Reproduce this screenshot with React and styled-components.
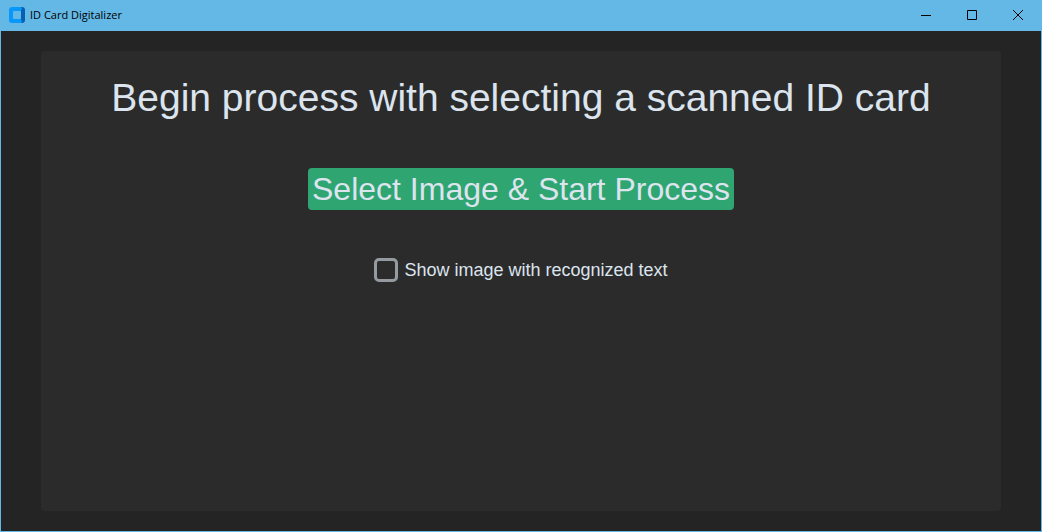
import React from "react";
import styled, { createGlobalStyle } from "styled-components";

const GlobalStyle = createGlobalStyle`
  *, *::before, *::after { box-sizing: border-box; }
  body { margin: 0; background: #242424; }
`;

const Window = styled.div`
  min-height: 100vh;
  display: flex;
  flex-direction: column;
  border: 1px solid #64b8e6;
  background: #242424;
  color: #dce4ee;
  font-family: "Liberation Sans", Arial, sans-serif;
`;

const TitleBar = styled.header`
  display: flex;
  align-items: center;
  height: 30px;
  padding: 0 0 2px 8px;
  background: #64b8e6;
  color: #000;
`;

const AppIcon = styled.svg`
  width: 16px;
  height: 16px;
  margin-right: 5px;
`;

const WindowTitle = styled.span`
  flex: 1;
  font-family: "Open Sans", "Noto Sans", sans-serif;
  font-size: 11px;
  line-height: 16px;
`;

const WindowButton = styled.button`
  display: flex;
  align-items: center;
  justify-content: center;
  width: 46px;
  height: 28px;
  padding: 0;
  border: 0;
  background: transparent;
`;

const Glyph = styled.svg`
  width: 10px;
  height: 10px;
  overflow: visible;
  fill: none;
  stroke: #000;
  stroke-width: 1;
`;

const Panel = styled.main`
  flex: 1;
  display: flex;
  flex-direction: column;
  align-items: center;
  margin: 20px 40px;
  padding: 20px;
  border-radius: 4px;
  background: #2b2b2b;
`;

const Heading = styled.h1`
  margin: 0;
  font-size: 39px;
  font-weight: 400;
  line-height: 54px;
  text-align: center;
`;

const PrimaryButton = styled.button`
  min-height: 42px;
  margin: 43px 0 48px;
  padding: 0 4px;
  border: 0;
  border-radius: 4px;
  background: #2fa572;
  color: #dce4ee;
  font-family: inherit;
  font-size: 32px;
  line-height: 42px;
`;

const CheckLabel = styled.label`
  display: flex;
  align-items: center;
  gap: 6px;
  font-size: 18px;
  line-height: 24px;
`;

const CheckBox = styled.input`
  appearance: none;
  width: 24px;
  height: 24px;
  margin: 0;
  border: 3px solid #949a9f;
  border-radius: 5px;
  background: transparent;
  &:checked { background: #2fa572; }
`;

export default function App() {
  return (
    <Window>
      <GlobalStyle />
      <TitleBar>
        <AppIcon viewBox="0 0 16 16" aria-hidden="true">
          <path d="M10 0H13Q16 0 16 3V13Q16 16 13 16H10Z" fill="#0560b4" />
          <path d="M3 0H12L13 2L12 4V12L13 14L12 16H3Q0 16 0 13V3Q0 0 3 0Z" fill="#0898fa" />
          <path d="M12 4L13 2V14L12 12Z" fill="#0560b4" />
          <rect x="4" y="4" width="8" height="8" rx="1" fill="#64b8e6" />
        </AppIcon>
        <WindowTitle>ID Card Digitalizer</WindowTitle>
        <WindowButton type="button" aria-label="Minimize">
          <Glyph viewBox="0 0 10 10"><path d="M0 5.5H10" /></Glyph>
        </WindowButton>
        <WindowButton type="button" aria-label="Maximize">
          <Glyph viewBox="0 0 10 10"><path d="M.5 .5H9.5V9.5H.5Z" /></Glyph>
        </WindowButton>
        <WindowButton type="button" aria-label="Close">
          <Glyph viewBox="0 0 10 10"><path d="M0 0L10 10M10 0L0 10" /></Glyph>
        </WindowButton>
      </TitleBar>
      <Panel>
        <Heading>Begin process with selecting a scanned ID card</Heading>
        <PrimaryButton type="button">Select Image &amp; Start Process</PrimaryButton>
        <CheckLabel>
          <CheckBox type="checkbox" />
          Show image with recognized text
        </CheckLabel>
      </Panel>
    </Window>
  );
}
